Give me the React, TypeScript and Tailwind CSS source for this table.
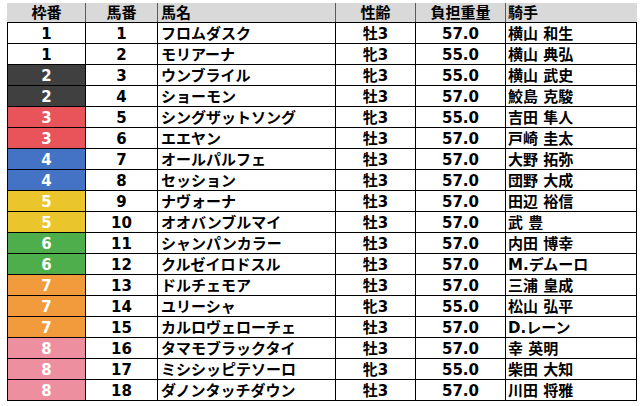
import React from "react";

type Row = [number, number, string, string, string, string];

const rows: Row[] = [
  [1, 1, "フロムダスク", "牡3", "57.0", "横山 和生"],
  [1, 2, "モリアーナ", "牝3", "55.0", "横山 典弘"],
  [2, 3, "ウンブライル", "牝3", "55.0", "横山 武史"],
  [2, 4, "ショーモン", "牡3", "57.0", "鮫島 克駿"],
  [3, 5, "シングザットソング", "牝3", "55.0", "吉田 隼人"],
  [3, 6, "エエヤン", "牡3", "57.0", "戸崎 圭太"],
  [4, 7, "オールパルフェ", "牡3", "57.0", "大野 拓弥"],
  [4, 8, "セッション", "牡3", "57.0", "団野 大成"],
  [5, 9, "ナヴォーナ", "牡3", "57.0", "田辺 裕信"],
  [5, 10, "オオバンブルマイ", "牡3", "57.0", "武 豊"],
  [6, 11, "シャンパンカラー", "牡3", "57.0", "内田 博幸"],
  [6, 12, "クルゼイロドスル", "牡3", "57.0", "M.デムーロ"],
  [7, 13, "ドルチェモア", "牡3", "57.0", "三浦 皇成"],
  [7, 14, "ユリーシャ", "牝3", "55.0", "松山 弘平"],
  [7, 15, "カルロヴェローチェ", "牡3", "57.0", "D.レーン"],
  [8, 16, "タマモブラックタイ", "牡3", "57.0", "幸 英明"],
  [8, 17, "ミシシッピテソーロ", "牝3", "55.0", "柴田 大知"],
  [8, 18, "ダノンタッチダウン", "牡3", "57.0", "川田 将雅"],
];

const wakuClass: Record<number, string> = {
  1: "bg-white text-black",
  2: "bg-[#404040] text-white",
  3: "bg-[#e9545a] text-white",
  4: "bg-[#4472c4] text-white",
  5: "bg-[#ebc52c] text-white",
  6: "bg-[#4eae4c] text-white",
  7: "bg-[#f29b3d] text-white",
  8: "bg-[#ee8fa0] text-white",
};

const grid = "grid grid-cols-[78px_72px_178px_80px_90px_131px]";

export default function App() {
  return (
    <div
      className="w-[643px] h-[406px] bg-white overflow-hidden"
      style={{ fontFamily: '"DejaVu Sans", "Noto Sans CJK JP", sans-serif' }}
    >
      <div className="ml-[7px] mt-[3px] w-[630px] text-[15px] font-bold leading-none text-black">
        <div className={`${grid} h-[20px] bg-[#d9d9d9] border-b border-black pl-px`}>
          <div className="flex items-center justify-center pt-[2px] border-r border-[#5a5a5a]">枠番</div>
          <div className="flex items-center justify-center pt-[2px] border-r border-[#5a5a5a]">馬番</div>
          <div className="flex items-center pl-[3px] pt-[2px] border-r border-[#5a5a5a]">馬名</div>
          <div className="flex items-center justify-center pt-[2px] border-r border-[#5a5a5a]">性齢</div>
          <div className="flex items-center justify-center pt-[2px] border-r border-[#5a5a5a]">負担重量</div>
          <div className="flex items-center pl-[2px] pt-[2px]">騎手</div>
        </div>
        <div className="border-l border-black">
          {rows.map((r) => (
            <div key={r[1]} className={`${grid} h-[21px] border-b border-black`}>
              <div className={`flex items-center justify-center pt-[2px] border-r border-black ${wakuClass[r[0]]}`}>{r[0]}</div>
              <div className="flex items-center justify-center pt-[2px] border-r border-black">{r[1]}</div>
              <div className="flex items-center pl-[3px] pt-[2px] border-r border-black whitespace-nowrap">{r[2]}</div>
              <div className="flex items-center justify-center pt-[2px] border-r border-black">{r[3]}</div>
              <div className="flex items-center justify-center pt-[2px] border-r border-black">{r[4]}</div>
              <div className="flex items-center pl-[2px] pt-[2px] border-r border-black whitespace-nowrap">{r[5]}</div>
            </div>
          ))}
        </div>
      </div>
    </div>
  );
}
